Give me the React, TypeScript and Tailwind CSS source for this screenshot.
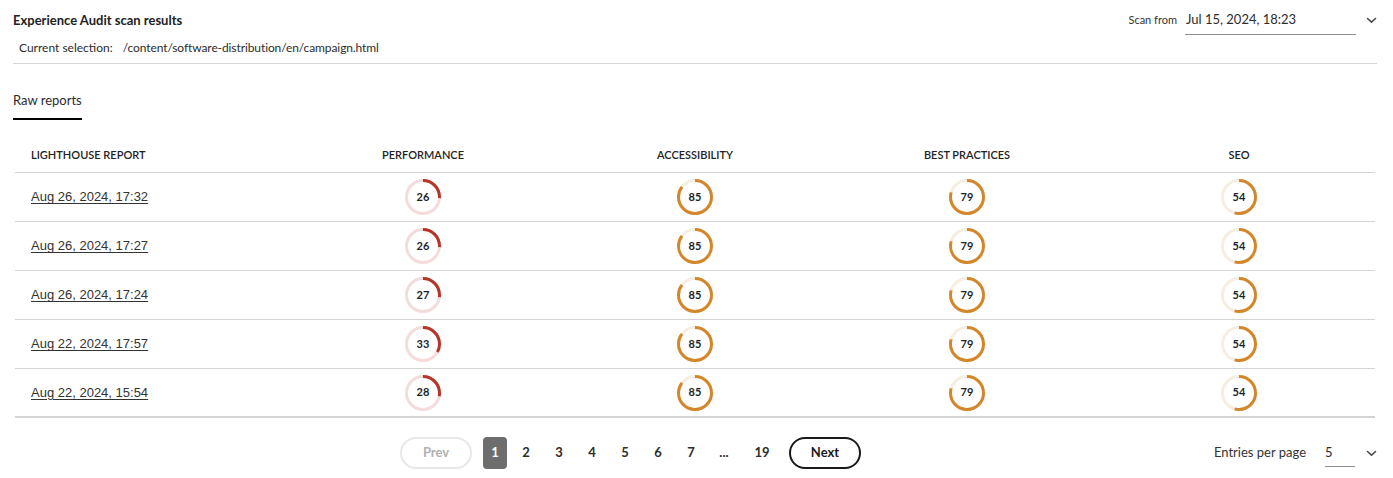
import React from 'react';

type Row = { date: string; perf: number; acc: number; best: number; seo: number };

const ROWS: Row[] = [
  { date: 'Aug 26, 2024, 17:32', perf: 26, acc: 85, best: 79, seo: 54 },
  { date: 'Aug 26, 2024, 17:27', perf: 26, acc: 85, best: 79, seo: 54 },
  { date: 'Aug 26, 2024, 17:24', perf: 27, acc: 85, best: 79, seo: 54 },
  { date: 'Aug 22, 2024, 17:57', perf: 33, acc: 85, best: 79, seo: 54 },
  { date: 'Aug 22, 2024, 15:54', perf: 28, acc: 85, best: 79, seo: 54 },
];

const PAGES = ['3', '4', '5', '6', '7', '...'];

function Chevron() {
  return (
    <svg width="11" height="7" viewBox="0 0 11 7" fill="none">
      <path d="M1.5 1.5 L5.5 5.2 L9.5 1.5" stroke="#4a4a4a" strokeWidth="1.6" strokeLinecap="round" strokeLinejoin="round" />
    </svg>
  );
}

function Gauge({ value }: { value: number }) {
  const r = 16.5;
  const c = 2 * Math.PI * r;
  const poor = value < 50;
  const color = poor ? '#b83328' : '#d3872a';
  const track = poor ? '#f4dcdc' : '#f7eee2';
  return (
    <div className="relative w-[36px] h-[36px]">
      <svg width="36" height="36" viewBox="0 0 36 36" className="-rotate-90">
        <circle cx="18" cy="18" r={r} fill="none" stroke={track} strokeWidth="3" />
        <circle
          cx="18"
          cy="18"
          r={r}
          fill="none"
          stroke={color}
          strokeWidth="3"
          strokeDasharray={`${(c * value) / 100} ${c}`}
        />
      </svg>
      <span className="absolute inset-0 flex items-center justify-center text-[11px] font-bold text-[#1f1f1f]">
        {value}
      </span>
    </div>
  );
}

export default function App() {
  return (
    <div className="w-[1393px] h-[478px] bg-white pl-[13px] pr-[16px] text-[#2c2c2c]" style={{ fontFamily: 'Lato, "Open Sans", sans-serif' }}>
      {/* header */}
      <div className="flex justify-between">
        <div>
          <div className="mt-[11px] leading-[18px] text-[13px] font-bold text-[#222]">Experience Audit scan results</div>
          <div className="mt-[10px] leading-[18px] text-[12px] pl-[6px] flex">
            <span>Current selection:</span>
            <span className="ml-[10px] tracking-[-0.1px]">/content/software-distribution/en/campaign.html</span>
          </div>
        </div>
        <div className="mt-[5px] flex items-center h-[30px]">
          <span className="text-[11px] text-[#333]">Scan from</span>
          <div className="ml-[8px] w-[171px] h-[30px] border-b border-[#8f8f8f] flex items-center text-[13px] pl-[1px]">
            Jul 15, 2024, 18:23
          </div>
          <div className="ml-[10px] w-[11px] flex items-center">
            <Chevron />
          </div>
        </div>
      </div>
      <div className="mt-[6px] border-t border-[#d6d6d6]" />

      {/* tabs */}
      <div className="mt-[27px] inline-block leading-[18px] text-[13px] pb-[9px] border-b-2 border-black">Raw reports</div>

      {/* table */}
      <div className="mt-[19px] ml-[2px] w-[1360px]">
        <div className="grid grid-cols-5 h-[34px] border-b border-[#d4d4d4] text-[11px] font-semibold uppercase text-[#222]">
          <div className="pl-[16px] flex items-center">Lighthouse report</div>
          <div className="flex items-center justify-center">Performance</div>
          <div className="flex items-center justify-center">Accessibility</div>
          <div className="flex items-center justify-center">Best practices</div>
          <div className="flex items-center justify-center">SEO</div>
        </div>
        {ROWS.map((row, i) => (
          <div
            key={i}
            className={
              i === ROWS.length - 1
                ? 'grid grid-cols-5 h-[49px] border-b-2 border-[#d4d4d4]'
                : 'grid grid-cols-5 h-[49px] border-b border-[#d4d4d4]'
            }
          >
            <div className="pl-[16px] flex items-center">
              <a
                href="#"
                className="underline text-[13px] text-[#333] underline-offset-[2px]"
                style={{ fontFamily: '"Liberation Sans", Arial, sans-serif' }}
              >
                {row.date}
              </a>
            </div>
            <div className="flex items-center justify-center">
              <Gauge value={row.perf} />
            </div>
            <div className="flex items-center justify-center">
              <Gauge value={row.acc} />
            </div>
            <div className="flex items-center justify-center">
              <Gauge value={row.best} />
            </div>
            <div className="flex items-center justify-center">
              <Gauge value={row.seo} />
            </div>
          </div>
        ))}
      </div>

      {/* pagination */}
      <div className="mt-[19px] flex items-center">
        <div className="ml-[387px] flex items-center">
          <button className="w-[72px] h-[32px] rounded-full border-2 border-[#e8e8e8] text-[13px] font-bold text-[#b1b1b1]">
            Prev
          </button>
          <div className="ml-[11px] w-[24px] h-[32px] rounded-[4px] bg-[#6d6d6d] text-white text-[13px] font-bold flex items-center justify-center">
            1
          </div>
          <div className="ml-[7px] w-[24px] h-[32px] text-[13px] font-bold text-[#2c2c2c] flex items-center justify-center">2</div>
          {PAGES.map((p) => (
            <div key={p} className="ml-[9px] w-[24px] h-[32px] text-[13px] font-bold text-[#2c2c2c] flex items-center justify-center">
              {p}
            </div>
          ))}
          <div className="ml-[14px] w-[24px] h-[32px] text-[13px] font-bold text-[#2c2c2c] flex items-center justify-center">19</div>
          <button className="ml-[15px] w-[72px] h-[32px] rounded-full border-2 border-[#1a1a1a] text-[13px] font-bold text-[#1a1a1a]">
            Next
          </button>
        </div>
        <div className="ml-auto flex items-center">
          <span className="text-[13px] text-[#333]">Entries per page</span>
          <div className="ml-[19px] w-[30px] h-[28px] border-b border-[#8f8f8f] flex items-center text-[13px]">5</div>
          <div className="ml-[11px] w-[11px] flex items-center">
            <Chevron />
          </div>
        </div>
      </div>
    </div>
  );
}
